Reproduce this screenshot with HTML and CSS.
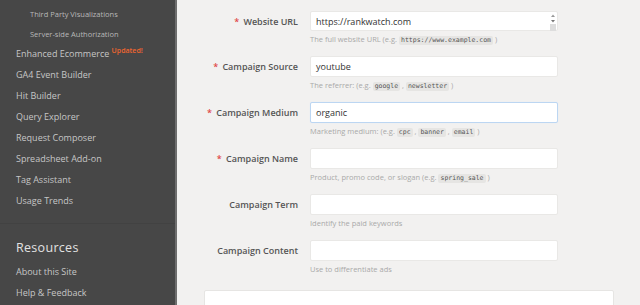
FILE: index.html
```html
<!DOCTYPE html>
<html lang="en">
<head>
  <meta charset="UTF-8" />
  <meta name="viewport" content="width=device-width, initial-scale=1.0" />
  <title>Campaign URL Builder</title>
  <link rel="stylesheet" href="styles.css">
</head>
<body>
  <div class="page">
    <nav class="sidebar">
      <ul class="nav">
        <li class="sub">Third Party Visualizations</li>
        <li class="sub">Server-side Authorization</li>
        <li>Enhanced Ecommerce <sup class="badge">Updated!</sup></li>
        <li>GA4 Event Builder</li>
        <li>Hit Builder</li>
        <li>Query Explorer</li>
        <li>Request Composer</li>
        <li>Spreadsheet Add-on</li>
        <li>Tag Assistant</li>
        <li>Usage Trends</li>
      </ul>
      <div class="section">
        <h3>Resources</h3>
        <ul class="nav">
          <li>About this Site</li>
          <li>Help &amp; Feedback</li>
        </ul>
      </div>
    </nav>

    <main class="main">
      <form class="form">
        <div class="row">
          <label class="label"><span class="req">*</span> Website URL</label>
          <div class="field">
            <div class="input textarea">
              <span>https://rankwatch.com</span>
              <span class="scroll">
                <svg width="6" height="18" viewBox="0 0 6 18">
                  <path d="M1 4 L3 1.5 L5 4 Z" fill="#999"/>
                  <path d="M1 7 L3 9.5 L5 7 Z" fill="#777"/>
                  <rect x="0" y="11" width="6" height="7" fill="#ddd"/>
                </svg>
              </span>
            </div>
            <div class="help">The full website URL (e.g. <code>https://www.example.com</code> )</div>
          </div>
        </div>

        <div class="row">
          <label class="label"><span class="req">*</span> Campaign Source</label>
          <div class="field">
            <div class="input">youtube</div>
            <div class="help">The referrer: (e.g. <code>google</code> , <code>newsletter</code> )</div>
          </div>
        </div>

        <div class="row">
          <label class="label"><span class="req">*</span> Campaign Medium</label>
          <div class="field">
            <div class="input focus">organic</div>
            <div class="help">Marketing medium: (e.g. <code>cpc</code> , <code>banner</code> , <code>email</code> )</div>
          </div>
        </div>

        <div class="row">
          <label class="label"><span class="req">*</span> Campaign Name</label>
          <div class="field">
            <div class="input"></div>
            <div class="help">Product, promo code, or slogan (e.g. <code>spring_sale</code> )</div>
          </div>
        </div>

        <div class="row">
          <label class="label">Campaign Term</label>
          <div class="field">
            <div class="input"></div>
            <div class="help">Identify the paid keywords</div>
          </div>
        </div>

        <div class="row">
          <label class="label">Campaign Content</label>
          <div class="field">
            <div class="input"></div>
            <div class="help">Use to differentiate ads</div>
          </div>
        </div>
      </form>

      <div class="result"></div>
    </main>
  </div>
</body>
</html>
```

FILE: styles.css
```css
html, body {
  margin: 0;
  padding: 0;
  height: 100%;
  overflow: hidden;
  font-family: 'Open Sans', 'Noto Sans', sans-serif;
  background: #f2f1f0;
}

.page {
  display: flex;
  height: 305px;
  overflow: hidden;
}

.sidebar {
  width: 175px;
  flex: none;
  background: #474747;
  border-right: 2px solid #6e6e6e;
  color: #c6c6c6;
  padding-top: 5px;
}

.nav {
  list-style: none;
  margin: 0;
  padding: 0;
}

.nav li {
  font-size: 9px;
  line-height: 21px;
  height: 21px;
  padding-left: 16px;
  white-space: nowrap;
}

.nav li.sub {
  font-size: 7.5px;
  line-height: 19.5px;
  height: 19.5px;
  padding-left: 30px;
  color: #b8b8b8;
}

.nav li.sub + li:not(.sub) {
  margin-top: -1px;
}

.badge {
  color: #f0652f;
  font-size: 7px;
  font-weight: 600;
  vertical-align: 4px;
  line-height: 0;
}

.section {
  border-top: 1px solid #424242;
  margin-top: 12px;
  padding-top: 13px;
}

.section h3 {
  margin: 0 0 2px;
  padding-left: 16px;
  font-size: 12.5px;
  font-weight: 400;
  color: #e2e2e2;
  letter-spacing: 0.3px;
  line-height: 22px;
}

.main {
  flex: 1;
  padding-top: 11px;
}

.form {
  display: flex;
  flex-direction: column;
  gap: 11px;
}

.row {
  display: grid;
  grid-template-columns: 121px 248px;
  column-gap: 12px;
}

.label {
  text-align: right;
  font-size: 9px;
  font-weight: 600;
  color: #555;
  line-height: 21px;
  white-space: nowrap;
}

.req {
  color: #e04848;
  margin-right: 2px;
}

.input {
  height: 21px;
  box-sizing: border-box;
  background: #fff;
  border: 1px solid #e9e8e6;
  border-radius: 2px;
  font-size: 9px;
  color: #333;
  line-height: 19px;
  padding: 0 5px;
}

.input.focus {
  border-color: #bcd6f2;
  box-shadow: 0 0 1px #d5e6f8;
}

.textarea {
  display: flex;
  justify-content: space-between;
  height: 20px;
  padding-right: 0;
}

.scroll {
  display: flex;
  align-items: flex-start;
  width: 7px;
  padding-top: 1px;
}

.help {
  margin-top: 3px;
  height: 11px;
  font-size: 7.5px;
  line-height: 11px;
  color: #a9a9a9;
  white-space: nowrap;
}

.help code {
  font-family: 'DejaVu Sans Mono', monospace;
  font-size: 6.5px;
  line-height: 9px;
  display: inline-block;
  color: #555;
  background: #e6e5e3;
  border-radius: 2px;
  padding: 0 2px;
}

.result {
  margin: 15px 26px 0 27px;
  height: 40px;
  background: #fff;
  border: 1px solid #e6e5e3;
  border-radius: 2px;
}
```
